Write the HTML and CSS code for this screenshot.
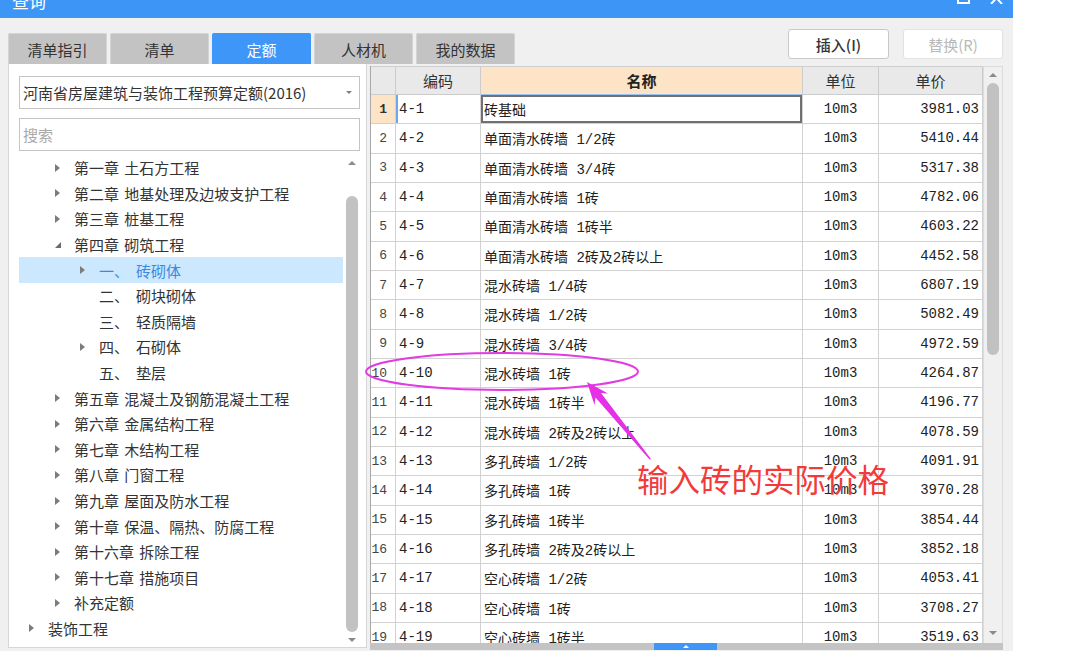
FILE: index.html
```html
<!DOCTYPE html>
<html lang="zh-CN">
<head>
<meta charset="utf-8">
<title>查询</title>
<link rel="stylesheet" href="styles.css">
</head>
<body>
<div class="page">
  <div class="window">
    <div class="titlebar">
      <div class="titlebar-inner">
        <span class="title">查询</span>
        <span class="win-icons">
          <svg width="13" height="12" viewBox="0 0 13 12"><rect x="1" y="1" width="11" height="10" fill="none" stroke="#fff" stroke-width="2"/></svg>
          <svg width="13" height="12" viewBox="0 0 13 12"><path d="M1 0 L12 12 M12 0 L1 12" stroke="#fff" stroke-width="2"/></svg>
        </span>
      </div>
    </div>

    <div class="toolbar">
      <div class="tabs">
        <div class="tab">清单指引</div>
        <div class="tab">清单</div>
        <div class="tab active">定额</div>
        <div class="tab">人材机</div>
        <div class="tab">我的数据</div>
      </div>
      <div class="actions">
        <div class="btn">插入(I)</div>
        <div class="btn disabled">替换(R)</div>
      </div>
    </div>

    <div class="main">
      <div class="left">
        <div class="select">河南省房屋建筑与装饰工程预算定额(2016)<span class="caret"></span></div>
        <div class="search">搜索</div>
        <div class="tree-area">
          <div class="tree">
            <div class="node l1"><span class="tw"><i class="tri"></i></span>第一章 土石方工程</div>
            <div class="node l1"><span class="tw"><i class="tri"></i></span>第二章 地基处理及边坡支护工程</div>
            <div class="node l1"><span class="tw"><i class="tri"></i></span>第三章 桩基工程</div>
            <div class="node l1"><span class="tw"><i class="tri open"></i></span>第四章 砌筑工程</div>
            <div class="node l2 selected"><span class="tw"><i class="tri"></i></span><span class="num">一、</span>砖砌体</div>
            <div class="node l2"><span class="tw"></span><span class="num">二、</span>砌块砌体</div>
            <div class="node l2"><span class="tw"></span><span class="num">三、</span>轻质隔墙</div>
            <div class="node l2"><span class="tw"><i class="tri"></i></span><span class="num">四、</span>石砌体</div>
            <div class="node l2"><span class="tw"></span><span class="num">五、</span>垫层</div>
            <div class="node l1"><span class="tw"><i class="tri"></i></span>第五章 混凝土及钢筋混凝土工程</div>
            <div class="node l1"><span class="tw"><i class="tri"></i></span>第六章 金属结构工程</div>
            <div class="node l1"><span class="tw"><i class="tri"></i></span>第七章 木结构工程</div>
            <div class="node l1"><span class="tw"><i class="tri"></i></span>第八章 门窗工程</div>
            <div class="node l1"><span class="tw"><i class="tri"></i></span>第九章 屋面及防水工程</div>
            <div class="node l1"><span class="tw"><i class="tri"></i></span>第十章 保温、隔热、防腐工程</div>
            <div class="node l1"><span class="tw"><i class="tri"></i></span>第十六章 拆除工程</div>
            <div class="node l1"><span class="tw"><i class="tri"></i></span>第十七章 措施项目</div>
            <div class="node l1"><span class="tw"><i class="tri"></i></span>补充定额</div>
            <div class="node l0"><span class="tw"><i class="tri"></i></span>装饰工程</div>
          </div>
          <div class="sb-small">
            <div class="sbs-up"><i class="up"></i></div>
            <div class="sbs-track"><div class="sbs-thumb"></div></div>
            <div class="sbs-down"><i class="down"></i></div>
          </div>
        </div>
      </div>

      <div class="right">
        <div class="grid-area">
          <div class="grid">
            <div class="row head">
              <div class="cell"></div>
              <div class="cell">编码</div>
              <div class="cell h-name">名称</div>
              <div class="cell">单位</div>
              <div class="cell">单价</div>
            </div>
            <div class="row current"><div class="cell c-no">1</div><div class="cell c-code">4-1</div><div class="cell c-name">砖基础</div><div class="cell c-unit">10m3</div><div class="cell c-price">3981.03</div></div>
            <div class="row"><div class="cell c-no">2</div><div class="cell c-code">4-2</div><div class="cell c-name">单面清水砖墙 1/2砖</div><div class="cell c-unit">10m3</div><div class="cell c-price">5410.44</div></div>
            <div class="row"><div class="cell c-no">3</div><div class="cell c-code">4-3</div><div class="cell c-name">单面清水砖墙 3/4砖</div><div class="cell c-unit">10m3</div><div class="cell c-price">5317.38</div></div>
            <div class="row"><div class="cell c-no">4</div><div class="cell c-code">4-4</div><div class="cell c-name">单面清水砖墙 1砖</div><div class="cell c-unit">10m3</div><div class="cell c-price">4782.06</div></div>
            <div class="row"><div class="cell c-no">5</div><div class="cell c-code">4-5</div><div class="cell c-name">单面清水砖墙 1砖半</div><div class="cell c-unit">10m3</div><div class="cell c-price">4603.22</div></div>
            <div class="row"><div class="cell c-no">6</div><div class="cell c-code">4-6</div><div class="cell c-name">单面清水砖墙 2砖及2砖以上</div><div class="cell c-unit">10m3</div><div class="cell c-price">4452.58</div></div>
            <div class="row"><div class="cell c-no">7</div><div class="cell c-code">4-7</div><div class="cell c-name">混水砖墙 1/4砖</div><div class="cell c-unit">10m3</div><div class="cell c-price">6807.19</div></div>
            <div class="row"><div class="cell c-no">8</div><div class="cell c-code">4-8</div><div class="cell c-name">混水砖墙 1/2砖</div><div class="cell c-unit">10m3</div><div class="cell c-price">5082.49</div></div>
            <div class="row"><div class="cell c-no">9</div><div class="cell c-code">4-9</div><div class="cell c-name">混水砖墙 3/4砖</div><div class="cell c-unit">10m3</div><div class="cell c-price">4972.59</div></div>
            <div class="row"><div class="cell c-no">10</div><div class="cell c-code">4-10</div><div class="cell c-name">混水砖墙 1砖</div><div class="cell c-unit">10m3</div><div class="cell c-price">4264.87</div></div>
            <div class="row"><div class="cell c-no">11</div><div class="cell c-code">4-11</div><div class="cell c-name">混水砖墙 1砖半</div><div class="cell c-unit">10m3</div><div class="cell c-price">4196.77</div></div>
            <div class="row"><div class="cell c-no">12</div><div class="cell c-code">4-12</div><div class="cell c-name">混水砖墙 2砖及2砖以上</div><div class="cell c-unit">10m3</div><div class="cell c-price">4078.59</div></div>
            <div class="row"><div class="cell c-no">13</div><div class="cell c-code">4-13</div><div class="cell c-name">多孔砖墙 1/2砖</div><div class="cell c-unit">10m3</div><div class="cell c-price">4091.91</div></div>
            <div class="row"><div class="cell c-no">14</div><div class="cell c-code">4-14</div><div class="cell c-name">多孔砖墙 1砖</div><div class="cell c-unit">10m3</div><div class="cell c-price">3970.28</div></div>
            <div class="row"><div class="cell c-no">15</div><div class="cell c-code">4-15</div><div class="cell c-name">多孔砖墙 1砖半</div><div class="cell c-unit">10m3</div><div class="cell c-price">3854.44</div></div>
            <div class="row"><div class="cell c-no">16</div><div class="cell c-code">4-16</div><div class="cell c-name">多孔砖墙 2砖及2砖以上</div><div class="cell c-unit">10m3</div><div class="cell c-price">3852.18</div></div>
            <div class="row"><div class="cell c-no">17</div><div class="cell c-code">4-17</div><div class="cell c-name">空心砖墙 1/2砖</div><div class="cell c-unit">10m3</div><div class="cell c-price">4053.41</div></div>
            <div class="row"><div class="cell c-no">18</div><div class="cell c-code">4-18</div><div class="cell c-name">空心砖墙 1砖</div><div class="cell c-unit">10m3</div><div class="cell c-price">3708.27</div></div>
            <div class="row"><div class="cell c-no">19</div><div class="cell c-code">4-19</div><div class="cell c-name">空心砖墙 1砖半</div><div class="cell c-unit">10m3</div><div class="cell c-price">3519.63</div></div>
          </div>
          <div class="vscroll">
            <div class="vs-up"><i class="up"></i></div>
            <div class="vs-thumb"></div>
            <div class="vs-down"><i class="down"></i></div>
          </div>
        </div>
        <div class="hscroll"><div class="hs-handle"><i class="hs-tri"></i></div></div>
      </div>
    </div>
  </div>

  <svg class="annot" width="1081" height="663" viewBox="0 0 1081 663">
    <ellipse cx="502" cy="371.5" rx="136" ry="18.5" fill="none" stroke="#e23be3" stroke-width="2"/>
    <polygon points="587,382 608,393.5 601,393 651,459 649.5,459.5 595.5,397.5 594.5,405" fill="#e531e6"/>
  </svg>
  <div class="note">输入砖的实际价格</div>
</div>
</body>
</html>
```

FILE: styles.css
```css
* { box-sizing: border-box; }

body {
  margin: 0;
  background: #ffffff;
  font-family: "Noto Sans CJK SC", "Noto Sans", sans-serif;
  color: #333333;
}

.page {
  position: relative;
  width: 1081px;
  height: 663px;
}

.window {
  width: 1013px;
  height: 651px;
  background: #f0f0f0;
  display: flex;
  flex-direction: column;
}

/* title bar (top part cropped) */
.titlebar {
  height: 18px;
  flex: none;
  background: #3d95f6;
  overflow: hidden;
}
.titlebar-inner {
  height: 36px;
  margin-top: -18px;
  display: flex;
  align-items: center;
  padding: 0 10px 0 12px;
}
.title {
  flex: 1;
  color: #ffffff;
  font-size: 17px;
}
.win-icons {
  display: flex;
  align-items: center;
  gap: 20px;
  margin-top: -4px;
}

/* toolbar: tabs + buttons */
.toolbar {
  height: 46px;
  flex: none;
  display: flex;
  justify-content: space-between;
  padding: 0 10px 0 8px;
}
.tabs {
  display: flex;
  gap: 3px;
  align-self: flex-end;
}
.tab {
  width: 99px;
  height: 31px;
  background: #c3c3c3;
  border: 1px solid #d4d4d4;
  border-bottom: 0;
  border-radius: 2px 2px 0 0;
  display: flex;
  align-items: center;
  justify-content: center;
  font-size: 15px;
  color: #333333;
}
.tab.active {
  background: #3d96f8;
  border-color: #3d96f8;
  color: #ffffff;
}
.actions {
  display: flex;
  gap: 14px;
  padding-top: 11px;
}
.btn {
  width: 101px;
  height: 30px;
  background: #ffffff;
  border: 1px solid #c9c9c9;
  border-radius: 3px;
  display: flex;
  align-items: center;
  justify-content: center;
  font-size: 15px;
  font-weight: 500;
  color: #333333;
}
.btn.disabled {
  width: 100px;
  color: #b9b9b9;
  font-weight: 400;
  border-color: #e2e2e2;
}

/* main area */
.main {
  flex: 1;
  min-height: 0;
  display: flex;
  padding-left: 8px;
}

.left {
  width: 359px;
  height: 584px;
  background: #ffffff;
  border-left: 1px solid #d6d6d6;
  border-right: 1px solid #d6d6d6;
  border-bottom: 1px solid #d6d6d6;
  display: flex;
  flex-direction: column;
  padding-top: 12px;
}
.select {
  margin-left: 10px;
  width: 341px;
  height: 33px;
  border: 1px solid #c4c4c4;
  display: flex;
  align-items: center;
  padding-left: 3px;
  font-size: 15px;
  color: #333333;
}
.caret {
  margin-left: auto;
  margin-right: 7px;
  border-left: 3px solid transparent;
  border-right: 3px solid transparent;
  border-top: 3px solid #808080;
}
.search {
  margin: 9px 0 0 10px;
  width: 341px;
  height: 33px;
  border: 1px solid #c4c4c4;
  padding-left: 3px;
  display: flex;
  align-items: center;
  font-size: 15px;
  color: #a9a9a9;
}

.tree-area {
  flex: 1;
  min-height: 0;
  display: flex;
  margin-top: 4px;
}
.tree {
  margin-left: 10px;
  width: 324px;
}
.node {
  height: 25.6px;
  display: flex;
  align-items: center;
  font-size: 15px;
  color: #333333;
  white-space: nowrap;
  word-spacing: 2px;
}
.node.l0 { padding-left: 10px; }
.node.l1 { padding-left: 36px; }
.node.l2 { padding-left: 61px; }
.node.selected {
  background: #cce8ff;
  color: #3a8ae0;
}
.tw {
  width: 19px;
  flex: none;
  display: flex;
  align-items: center;
}
.tri {
  width: 0;
  height: 0;
  border-left: 5px solid #7c7c7c;
  border-top: 4px solid transparent;
  border-bottom: 4px solid transparent;
}
.tri.open {
  border-left: 0;
  border-top: 6px solid transparent;
  border-bottom: 0;
  border-right: 6px solid #6b6b6b;
}
.num {
  width: 37px;
  flex: none;
}

/* small scrollbar for the tree */
.sb-small {
  margin-left: 2px;
  width: 14px;
  display: flex;
  flex-direction: column;
}
.sbs-up, .sbs-down {
  height: 15px;
  flex: none;
  display: flex;
  align-items: center;
  justify-content: center;
}
.sbs-track {
  flex: 1;
  padding: 26px 1px 0;
  display: flex;
  flex-direction: column;
}
.sbs-thumb {
  flex: 1;
  background: #c2c2c2;
  border-radius: 6px;
}
.up {
  width: 0;
  height: 0;
  border-left: 4px solid transparent;
  border-right: 4px solid transparent;
  border-bottom: 4px solid #8a8a8a;
}
.down {
  width: 0;
  height: 0;
  border-left: 4px solid transparent;
  border-right: 4px solid transparent;
  border-top: 4px solid #8a8a8a;
}

/* right grid */
.right {
  margin-left: 3px;
  margin-top: 2px;
  width: 633px;
  display: flex;
  flex-direction: column;
}
.grid-area {
  height: 577px;
  display: flex;
}
.grid {
  width: 613px;
  overflow: hidden;
  background: #ffffff;
  border-left: 1px solid #a8a8a8;
  font-family: "Liberation Mono", "Noto Sans CJK SC", monospace;
  font-size: 14px;
  color: #222222;
}
.row {
  display: grid;
  grid-template-columns: 25px 85px 322px 76px 104px;
  height: 29.33px;
}
.cell {
  border-right: 1px solid #d2d2d2;
  border-bottom: 1px solid #d2d2d2;
  display: flex;
  align-items: center;
  white-space: nowrap;
  overflow: hidden;
}
.row.head {
  height: 29px;
  border-top: 1px solid #cfcfcf;
  background: #e9e9e9;
  font-family: "Noto Sans CJK SC", sans-serif;
  font-size: 15px;
  color: #333333;
}
.row.head .cell {
  justify-content: center;
  border-color: #cccccc;
}
.row.head .h-name {
  background: #fde4c6;
  font-weight: 700;
  color: #222222;
  border-bottom-color: #9cc4f0;
}
.c-no {
  justify-content: flex-end;
  padding-right: 8px;
  font-size: 13px;
  color: #444444;
}
.c-code { padding-left: 3px; }
.c-name { padding-left: 3px; }
.c-unit { justify-content: center; }
.c-price {
  justify-content: flex-end;
  padding-right: 3px;
}
.row.current .c-no {
  background: #fde4c6;
  font-weight: 700;
  color: #333333;
}
.row.current .c-code {
  box-shadow: inset 2px 0 0 #6aa8f0;
}
.row.current .c-name {
  box-shadow: inset 0 0 0 2px #707070;
}

/* vertical scrollbar for grid */
.vscroll {
  width: 20px;
  background: #f0f0f0;
  border: 1px solid #dcdcdc;
  border-bottom: 0;
  display: flex;
  flex-direction: column;
  align-items: center;
}
.vs-up {
  height: 16px;
  flex: none;
  display: flex;
  align-items: center;
  justify-content: center;
}
.vs-thumb {
  width: 12px;
  height: 272px;
  background: #c1c1c1;
  border-radius: 6px;
}
.vs-down {
  margin-top: auto;
  height: 20px;
  flex: none;
  display: flex;
  align-items: center;
  justify-content: center;
}

/* horizontal strip at bottom */
.hscroll {
  height: 7px;
  background: #c4c4c4;
  display: flex;
}
.hs-handle {
  margin-left: 284px;
  width: 63px;
  background: #3d96f8;
  display: flex;
  align-items: center;
  justify-content: center;
}
.hs-tri {
  width: 0;
  height: 0;
  border-left: 3px solid transparent;
  border-right: 3px solid transparent;
  border-bottom: 3px solid #ffffff;
}

/* annotation overlay */
.annot {
  position: absolute;
  left: 0;
  top: 0;
  pointer-events: none;
}
.note {
  position: absolute;
  left: 637px;
  top: 463px;
  font-size: 31.5px;
  line-height: 1;
  color: #f23a3a;
  white-space: nowrap;
}
```
